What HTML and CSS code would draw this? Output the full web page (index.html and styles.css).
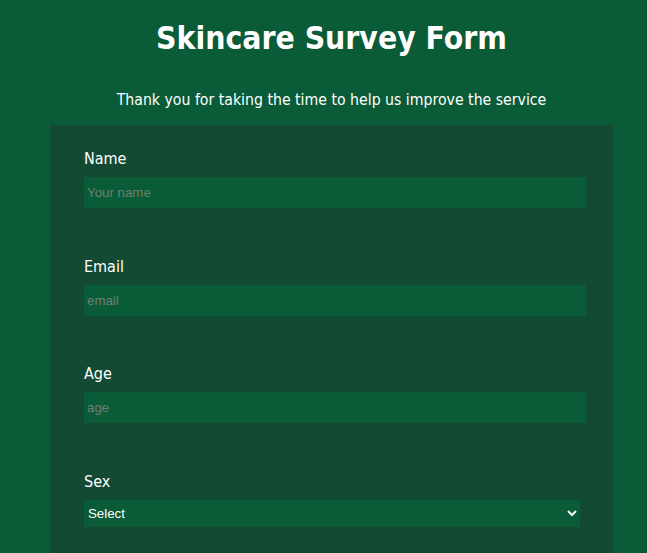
FILE: index.html
```html
<!DOCTYPE html>
<html lang="en">
<head>
<meta charset="utf-8">
<title>Skincare Survey Form</title>
<link rel="stylesheet" href="styles.css">
</head>
<body>
<div class="page">
  <h1 class="title">Skincare Survey Form</h1>
  <p class="subtitle">Thank you for taking the time to help us improve the service</p>
  <form class="survey">
    <div class="group">
      <label class="label" for="name">Name</label>
      <input class="field" id="name" type="text" placeholder="Your name">
    </div>
    <div class="group">
      <label class="label" for="email">Email</label>
      <input class="field" id="email" type="email" placeholder="email">
    </div>
    <div class="group">
      <label class="label" for="age">Age</label>
      <input class="field" id="age" type="number" placeholder="age">
    </div>
    <div class="group">
      <label class="label" for="sex">Sex</label>
      <select class="select" id="sex">
        <option>Select</option>
        <option>Female</option>
        <option>Male</option>
      </select>
    </div>
  </form>
</div>
</body>
</html>
```
FILE: styles.css
```css
html, body {
  margin: 0;
  padding: 0;
  background: #0a5b37;
}
body {
  font-family: "DejaVu Sans Condensed", "DejaVu Sans", sans-serif;
  color: #ffffff;
  overflow: hidden;
}
.page {
  padding-left: 16px;
  display: flex;
  flex-direction: column;
  align-items: center;
}
.title {
  margin: 18px 0 0;
  font-size: 31.6px;
  font-weight: bold;
  line-height: 40px;
}
.subtitle {
  margin: 32px 0 0;
  font-size: 15.7px;
  line-height: 20px;
}
.survey {
  margin-top: 15px;
  width: 563px;
  box-sizing: border-box;
  padding: 24px 27px 30px 34px;
  background: #134a33;
}
.group {
  display: flex;
  flex-direction: column;
  align-items: flex-start;
  margin-bottom: 48.67px;
}
.label {
  font-size: 16px;
  line-height: 20px;
  margin-bottom: 8px;
}
.field {
  width: 502px;
  height: 31px;
  box-sizing: border-box;
  border: none;
  outline: none;
  background: #0a5b37;
  color: #ffffff;
  padding: 0 3px;
  font-family: "Liberation Sans", Arial, sans-serif;
  font-size: 13.3px;
}
.field::placeholder {
  color: #6f7f72;
}
.select {
  width: 496px;
  height: 27px;
  box-sizing: border-box;
  border: none;
  outline: none;
  background: #0a5b37;
  color: #ffffff;
  font-family: "Liberation Sans", Arial, sans-serif;
  font-size: 13.3px;
  padding: 0;
}
```
